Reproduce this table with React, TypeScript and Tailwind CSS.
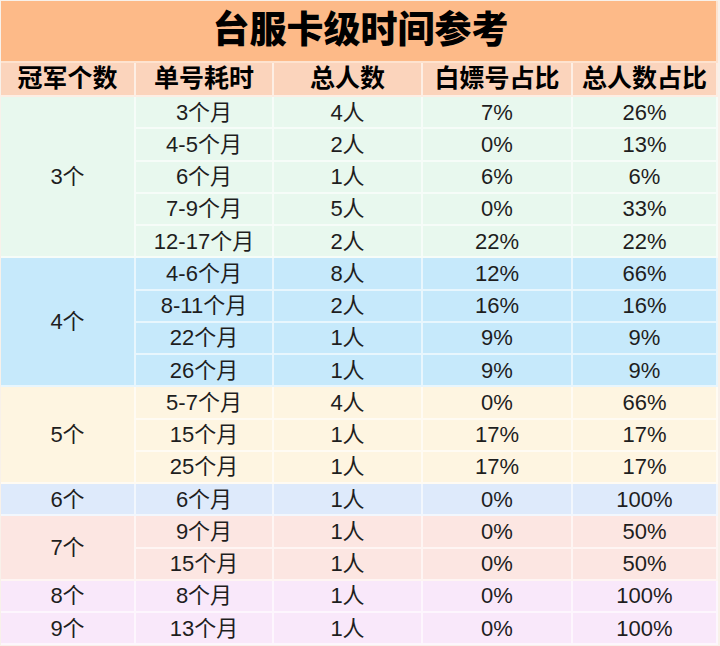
import React from "react";

type Row = { m: string; p: string; a: string; b: string };
type Group = { name: string; bg: string; rows: Row[] };

const groups: Group[] = [
  {
    name: "3个",
    bg: "bg-[#e8f8ee]",
    rows: [
      { m: "3个月", p: "4人", a: "7%", b: "26%" },
      { m: "4-5个月", p: "2人", a: "0%", b: "13%" },
      { m: "6个月", p: "1人", a: "6%", b: "6%" },
      { m: "7-9个月", p: "5人", a: "0%", b: "33%" },
      { m: "12-17个月", p: "2人", a: "22%", b: "22%" },
    ],
  },
  {
    name: "4个",
    bg: "bg-[#c6e9fb]",
    rows: [
      { m: "4-6个月", p: "8人", a: "12%", b: "66%" },
      { m: "8-11个月", p: "2人", a: "16%", b: "16%" },
      { m: "22个月", p: "1人", a: "9%", b: "9%" },
      { m: "26个月", p: "1人", a: "9%", b: "9%" },
    ],
  },
  {
    name: "5个",
    bg: "bg-[#fef5e1]",
    rows: [
      { m: "5-7个月", p: "4人", a: "0%", b: "66%" },
      { m: "15个月", p: "1人", a: "17%", b: "17%" },
      { m: "25个月", p: "1人", a: "17%", b: "17%" },
    ],
  },
  {
    name: "6个",
    bg: "bg-[#deeafb]",
    rows: [{ m: "6个月", p: "1人", a: "0%", b: "100%" }],
  },
  {
    name: "7个",
    bg: "bg-[#fce6e2]",
    rows: [
      { m: "9个月", p: "1人", a: "0%", b: "50%" },
      { m: "15个月", p: "1人", a: "0%", b: "50%" },
    ],
  },
  {
    name: "8个",
    bg: "bg-[#f9e8fa]",
    rows: [{ m: "8个月", p: "1人", a: "0%", b: "100%" }],
  },
  {
    name: "9个",
    bg: "bg-[#f9e8fa]",
    rows: [{ m: "13个月", p: "1人", a: "0%", b: "100%" }],
  },
];

const spanClass: Record<number, string> = {
  1: "row-span-1",
  2: "row-span-2",
  3: "row-span-3",
  4: "row-span-4",
  5: "row-span-5",
};

const cell =
  "flex items-center justify-center border-r-2 border-b-2 border-white/60";

export default function App() {
  const headers = ["冠军个数", "单号耗时", "总人数", "白嫖号占比", "总人数占比"];
  return (
    <div
      className="w-[720px] h-[646px] bg-[#f8f1ea] pt-[1px] pl-[1px] overflow-hidden text-[#1e1e1e]"
      style={{ fontFamily: '"Liberation Sans", "Noto Sans CJK SC", sans-serif' }}
    >
      <div className="grid grid-cols-[135px_138px_149px_150px_145px] grid-rows-[62px_34px_repeat(17,32.25px)]">
        <div
          className={`${cell} col-span-5 bg-[#fdba88] text-[37px] font-black text-black pl-[4px]`}
        >
          台服卡级时间参考
        </div>
        {headers.map((h) => (
          <div
            key={h}
            className={`${cell} bg-[#fbd4bc] text-[25px] font-bold text-black`}
          >
            {h}
          </div>
        ))}
        {groups.map((g) =>
          g.rows.map((r, i) => (
            <React.Fragment key={g.name + i}>
              {i === 0 && (
                <div
                  className={`${cell} ${g.bg} ${spanClass[g.rows.length]} text-[22px]`}
                >
                  {g.name}
                </div>
              )}
              <div className={`${cell} ${g.bg} text-[22px]`}>{r.m}</div>
              <div className={`${cell} ${g.bg} text-[22px]`}>{r.p}</div>
              <div className={`${cell} ${g.bg} text-[22px]`}>{r.a}</div>
              <div className={`${cell} ${g.bg} text-[22px]`}>{r.b}</div>
            </React.Fragment>
          ))
        )}
      </div>
    </div>
  );
}
